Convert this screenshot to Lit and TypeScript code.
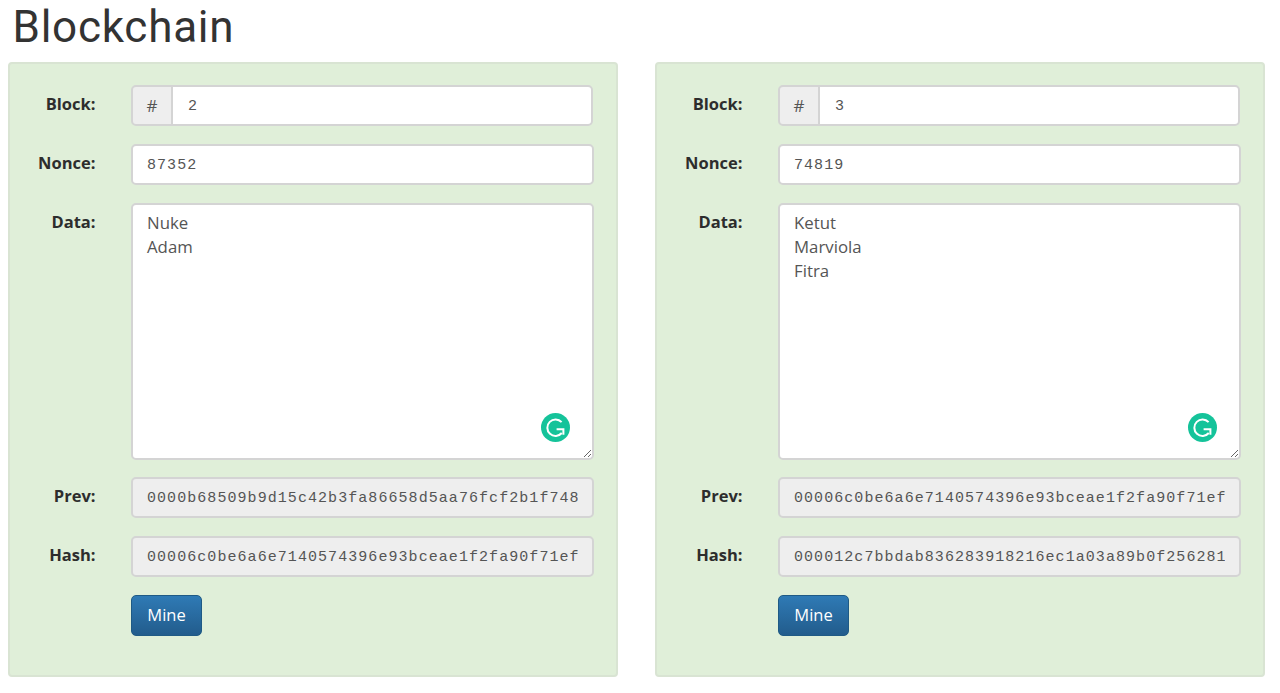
import { LitElement, html, css, svg } from "lit";
import { customElement } from "lit/decorators.js";

interface Block { n: string; nonce: string; data: string; prev: string; hash: string; }

const BLOCKS: Block[] = [
  { n: "2", nonce: "87352", data: "Nuke\nAdam", prev: "0000b68509b9d15c42b3fa86658d5aa76fcf2b1f748", hash: "00006c0be6a6e7140574396e93bceae1f2fa90f71ef" },
  { n: "3", nonce: "74819", data: "Ketut\nMarviola\nFitra", prev: "00006c0be6a6e7140574396e93bceae1f2fa90f71ef", hash: "000012c7bbdab836283918216ec1a03a89b0f256281" },
];

@customElement("app-root")
export class AppRoot extends LitElement {
  static styles = css`
    :host { display: block; box-sizing: border-box; height: 693px; overflow: hidden; background: #fff; padding: 0 15px 0 7.5px; font-family: "Open Sans", sans-serif; color: #333; }
    * { box-sizing: border-box; }
    h1 { margin: 0 0 0 5px; height: 62px; padding-top: 1px; font-family: Roboto, sans-serif; font-size: 44px; line-height: 52px; font-weight: 400; letter-spacing: 0.75px; color: #333; }
    .grid { display: grid; grid-template-columns: 610.5px 610.5px; column-gap: 36.5px; }
    .panel { height: 615px; background: #e0efd9; border: 2px solid #d9e4d3; border-radius: 4px; padding: 21px 22px 0 0; display: flex; flex-direction: column; gap: 18px; }
    .row { display: grid; grid-template-columns: 86px 463px; column-gap: 35.5px; height: 41px; }
    .row.tall { height: 257px; margin-bottom: -1px; }
    label { font-weight: 700; font-size: 16.5px; line-height: 20px; padding-top: 8.5px; text-align: right; color: #2d2d2d; }
    .ctl { width: 100%; height: 100%; border: 2px solid #d4d4d4; border-radius: 5px; background: #fff; color: #555; padding: 1px 14px 0; outline: none; margin: 0; display: block; }
    input.ctl { font-family: "Liberation Mono", monospace; font-size: 15px; letter-spacing: 1.06px; }
    input.ctl[readonly] { background: #eee; }
    .group { display: flex; width: 462px; height: 41px; }
    .addon { width: 41px; flex: none; display: flex; align-items: center; justify-content: center; background: #eee; border: 2px solid #d4d4d4; border-right-width: 1px; border-radius: 5px 0 0 5px; color: #555; font-size: 17px; }
    .group input.ctl { flex: 1; min-width: 0; border-left-width: 1px; border-radius: 0 5px 5px 0; padding-left: 15px; }
    .area { position: relative; height: 100%; }
    textarea.ctl { font-family: "Open Sans", sans-serif; font-size: 16.8px; line-height: 24px; padding: 6px 14px; color: #555; resize: vertical; }
    .g { position: absolute; right: 24px; bottom: 18px; width: 29px; height: 29px; }
    button { grid-column: 2; width: 71px; height: 41px; padding: 0 0 2px; border: 1px solid #1f5a85; border-radius: 5px; background: linear-gradient(#2f7ab5, #225c8c); color: #fff; font-family: "Open Sans", sans-serif; font-size: 16.5px; }
  `;

  private grammarly() {
    return html`<svg class="g" viewBox="0 0 29 29" aria-hidden="true">
      ${svg`<circle cx="14.5" cy="14.5" r="14.5" fill="#15c39a"></circle>
      <path d="M20.6 9.2A8.2 8.2 0 1 0 20.8 20" fill="none" stroke="#fff" stroke-width="2"></path>
      <path d="M15.6 16.2H22.4V21.8" fill="none" stroke="#fff" stroke-width="2"></path>`}
    </svg>`;
  }

  private block(b: Block) {
    return html`<div class="panel">
      <div class="row"><label>Block:</label><div class="group"><span class="addon">#</span><input class="ctl" value=${b.n} /></div></div>
      <div class="row"><label>Nonce:</label><input class="ctl" value=${b.nonce} /></div>
      <div class="row tall"><label>Data:</label><div class="area"><textarea class="ctl" spellcheck="false">${b.data}</textarea>${this.grammarly()}</div></div>
      <div class="row"><label>Prev:</label><input class="ctl" readonly value=${b.prev} /></div>
      <div class="row"><label>Hash:</label><input class="ctl" readonly value=${b.hash} /></div>
      <div class="row"><button>Mine</button></div>
    </div>`;
  }

  render() {
    return html`<h1>Blockchain</h1><div class="grid">${BLOCKS.map((b) => this.block(b))}</div>`;
  }
}
